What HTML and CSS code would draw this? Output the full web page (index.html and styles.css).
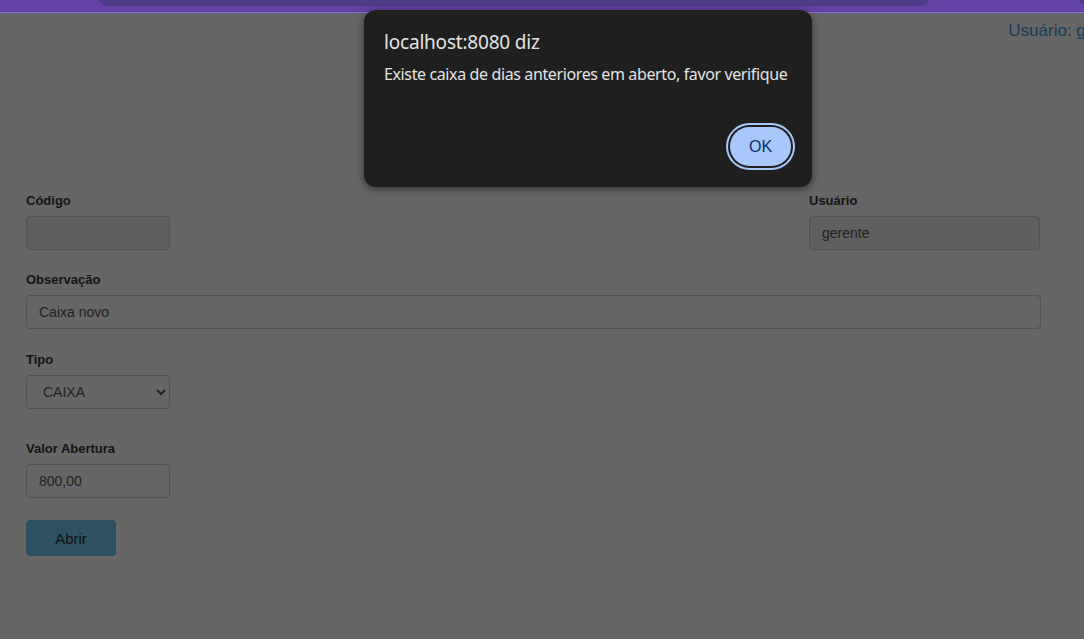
FILE: index.html
```html
<!DOCTYPE html>
<html lang="pt-BR">
<head>
<meta charset="utf-8">
<title>Abertura de Caixa</title>
<link rel="stylesheet" href="styles.css">
</head>
<body>
<div class="topbar"><div class="omnibox"></div><div class="corner"></div></div>
<div class="page">
  <div class="userline"><span class="user">Usuário: gerente</span></div>
  <form class="form">
    <div class="row-top">
      <div class="group g-codigo">
        <label class="lbl">Código</label>
        <input class="field disabled" type="text" value="" disabled>
      </div>
      <div class="group g-usuario">
        <label class="lbl">Usuário</label>
        <input class="field disabled" type="text" value="gerente" disabled>
      </div>
    </div>
    <div class="group g-obs">
      <label class="lbl">Observação</label>
      <input class="field" type="text" value="Caixa novo">
    </div>
    <div class="group g-tipo">
      <label class="lbl">Tipo</label>
      <select class="field sel"><option>CAIXA</option></select>
    </div>
    <div class="group g-valor">
      <label class="lbl">Valor Abertura</label>
      <input class="field" type="text" value="800,00">
    </div>
    <button class="btn-abrir" type="button">Abrir</button>
  </form>
</div>
<div class="overlay"></div>
<div class="dialog">
  <div class="dlg-title">localhost:8080 diz</div>
  <div class="dlg-msg">Existe caixa de dias anteriores em aberto, favor verifique</div>
  <div class="dlg-actions"><button class="dlg-ok" type="button">OK</button></div>
</div>
</body>
</html>
```
FILE: styles.css
```css
html, body { margin: 0; padding: 0; }
body {
  width: 1084px; height: 639px; overflow: hidden;
  background: #ffffff;
  font-family: "Liberation Sans", Arial, sans-serif;
  color: #333;
  position: relative;
}
.topbar {
  position: relative; z-index: 2;
  height: 12px; background: #6441a4;
  border-bottom: 1px solid #8d6fd2;
}
.omnibox {
  position: absolute; left: 97px; width: 834px; top: -20px; height: 26px;
  background: #4f3a86; border-radius: 12px;
}
.corner {
  position: absolute; right: -20px; width: 26px; top: -20px; height: 26px;
  background: #4f3a86; border-radius: 12px;
}
.page { padding: 0 0 0 26px; }
.userline {
  display: flex; justify-content: flex-end;
  margin-right: -50px; padding-top: 8px; height: 20px;
}
.user { font-size: 17px; line-height: 20px; color: #3d9ae0; white-space: nowrap; }
.form { margin-top: 150px; width: 1015px; }
.row-top { display: flex; justify-content: space-between; }
.group { display: flex; flex-direction: column; }
.lbl { font-size: 13px; font-weight: bold; line-height: 20px; margin-bottom: 5px; color: #333; }
.field {
  box-sizing: border-box; height: 34px; border: 1px solid #ccc; border-radius: 4px;
  padding: 0 12px; font-family: "Liberation Sans", Arial, sans-serif; font-size: 14px;
  color: #555; background: #fff; margin: 0;
}
.field.disabled { background: #eee; }
.g-codigo .field { width: 144px; }
.g-usuario { margin-right: 1px; }
.g-usuario .field { width: 231px; }
.g-obs { margin-top: 20px; }
.g-obs .field { width: 1015px; }
.g-tipo { margin-top: 21px; }
.sel { width: 144px; padding-left: 12px; }
.g-valor { margin-top: 30px; }
.g-valor .field { width: 144px; }
.btn-abrir {
  margin-top: 22px; width: 90px; height: 36px; border: 1px solid #62c2ef; border-radius: 4px;
  background: #6ccaf5; color: #333; font-family: "Liberation Sans", Arial, sans-serif; font-size: 15px;
}
.overlay { position: absolute; inset: 0; background: rgba(0,0,0,0.6); z-index: 1; }
.dialog {
  position: absolute; z-index: 3; left: 364px; top: 10px; width: 448px; height: 177px;
  box-sizing: border-box; padding: 20px 20px 0 20px;
  background: #1f1f1f; border-radius: 12px;
  box-shadow: 0 2px 8px rgba(0,0,0,0.5);
  font-family: "Noto Sans", "Open Sans", sans-serif; color: #e3e3e3;
}
.dlg-title { font-size: 19px; line-height: 24px; margin-top: 0; letter-spacing: -0.2px; }
.dlg-msg { font-size: 16px; line-height: 22px; margin-top: 9px; letter-spacing: -0.38px; }
.dlg-actions { display: flex; justify-content: flex-end; margin-top: 42px; padding-right: 1px; }
.dlg-ok {
  width: 61px; height: 39px; border-radius: 20px; border: none; background: #a8c7fa;
  color: #062e6f; font-family: "Liberation Sans", Arial, sans-serif; font-size: 16px;
  box-shadow: 0 0 0 2px #1f1f1f, 0 0 0 4px #a8c7fa;
}
```
